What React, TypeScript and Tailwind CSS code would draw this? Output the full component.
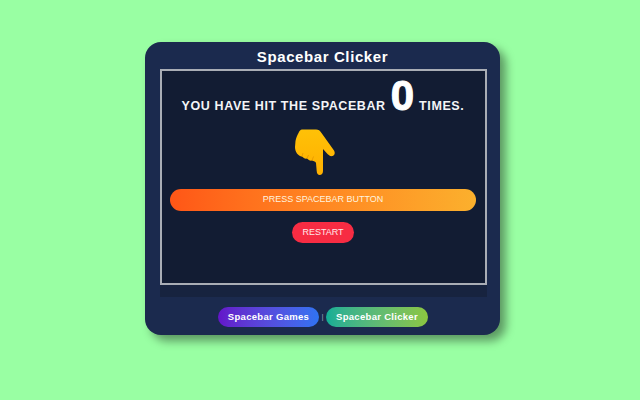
const Hand = () => (
  <svg viewBox="0 0 60 60" className="w-[60px] h-[60px]">
    <defs>
      <linearGradient id="hand" x1="0" y1="0" x2="0" y2="1">
        <stop offset="0" stopColor="#ffc107" />
        <stop offset="1" stopColor="#ffb000" />
      </linearGradient>
    </defs>
    <path
      d="M17 9.5 L31 9.5 C33.5 9.5 35 10.5 36.5 13 L49 30.5 C50.5 33 49.5 35.5 47.5 36 C45.5 36.5 44 35.5 42.5 34 L38 29 L38 51 C38 53.5 36.5 55 34.7 55 C33 55 31.8 53.5 31.7 51 L31 43 C30.5 41.5 29 41 27 40.5 C25 41 23.5 40 22 38.5 C20 39 18.5 38 17 36.5 C13 36 10 32 10 27 L10.5 21 C11 18 12 16 13.5 13 C14.5 11 15.5 9.5 17 9.5 Z"
      fill="url(#hand)"
    />
    <path d="M17 36.5 L18 33 M22 38.5 L23.5 35 M27 40.5 L28.5 36.5" stroke="#e69500" strokeWidth="0.8" fill="none" />
  </svg>
);

export default function App() {
  return (
    <div className="min-h-[400px] bg-[#99ffa3] pt-[42px] pl-[145px] font-['Liberation_Sans',Arial,sans-serif]">
      <div className="w-[355px] h-[293px] rounded-[16px] bg-[#1b2a4e] shadow-[6px_6px_10px_rgba(0,0,0,0.4)] flex flex-col items-center">
        <h1 className="h-[27px] pt-[5px] text-white text-[15px] leading-[20px] font-bold tracking-[0.6px]">
          Spacebar Clicker
        </h1>

        {/* GAME PANEL */}
        <div className="w-[327px] h-[216px] ml-[1px] bg-[#121c33] border-2 border-[#a9adb5] shadow-[0_12px_0_#17233f] flex flex-col items-center">
          <div className="h-[46px] pt-[3px] flex items-baseline text-[#f4f5f7] text-[12.5px] font-bold tracking-[0.6px] whitespace-nowrap">
            <span>YOU HAVE HIT THE SPACEBAR</span>
            <span className="text-white text-[42px] leading-[44px] mx-[5px] tracking-normal [-webkit-text-stroke:1px_white]">0</span>
            <span>TIMES.</span>
          </div>

          <div className="h-[69px] mt-[3px] mr-[16px]">
            <Hand />
          </div>

          <div className="w-[306px] h-[22px] rounded-full bg-gradient-to-r from-[#ff5617] to-[#fbb02d] flex items-center justify-center text-[#fff3df] text-[9px]">
            PRESS SPACEBAR BUTTON
          </div>

          <div className="w-[62px] h-[21px] mt-[11px] rounded-full bg-[#f72c43] flex items-center justify-center text-[#ffe9ea] text-[9px]">
            RESTART
          </div>
        </div>

        {/* LINKS */}
        <div className="mt-[22px] ml-[1px] flex items-center text-[9.5px] font-bold tracking-[0.3px] text-white whitespace-nowrap">
          <div className="w-[101px] h-[20px] rounded-full bg-gradient-to-r from-[#6314c9] to-[#2e73f2] flex items-center justify-center">
            Spacebar Games
          </div>
          <span className="w-[7px] text-center text-[#9aa3b5] font-normal text-[8px] tracking-normal">|</span>
          <div className="w-[102px] h-[20px] rounded-full bg-gradient-to-r from-[#0fae96] to-[#8cc63f] flex items-center justify-center">
            Spacebar Clicker
          </div>
        </div>
      </div>
    </div>
  );
}
